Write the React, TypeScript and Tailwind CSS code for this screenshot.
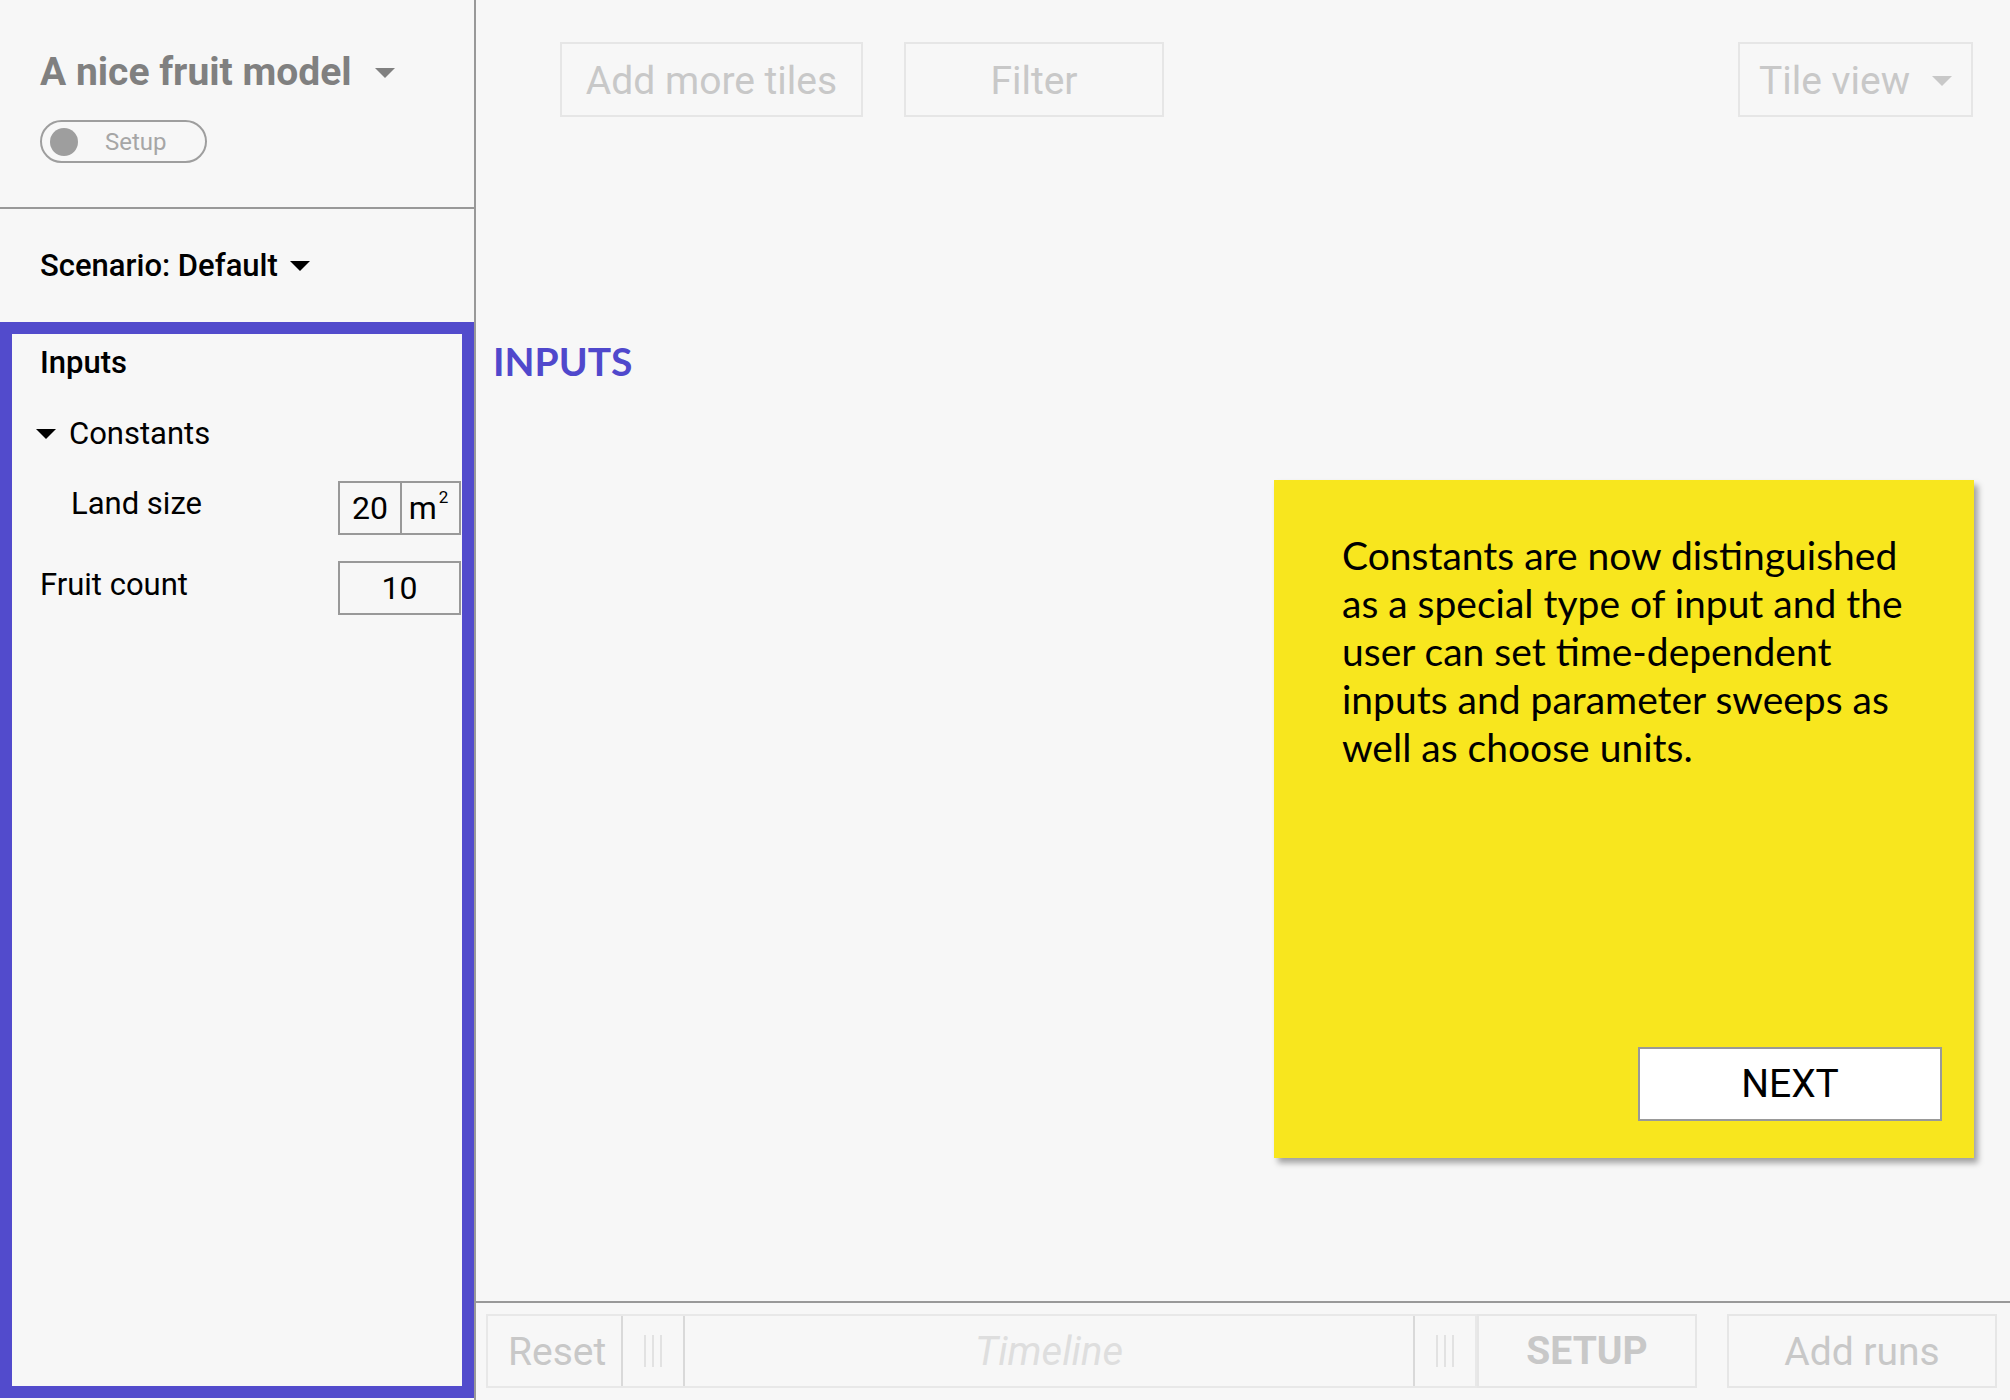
import React from "react";

const Caret = ({ color, w = 20, h = 10 }: { color: string; w?: number; h?: number }) => (
  <svg viewBox="0 0 20 10" width={w} height={h} className="shrink-0">
    <polygon points="0,0 20,0 10,10" fill={color} />
  </svg>
);

const Handle = () => (
  <div className="flex items-center justify-center gap-[6px] w-[62px] h-full border-l-2 border-[#d9d9d9]">
    <span className="w-[2px] h-[32px] bg-[#e2e2e2]" />
    <span className="w-[2px] h-[32px] bg-[#e2e2e2]" />
    <span className="w-[2px] h-[32px] bg-[#e2e2e2]" />
  </div>
);

export default function App() {
  return (
    <div className="flex w-[2010px] h-[1400px] overflow-hidden bg-[#f7f7f7] font-['Roboto',sans-serif]">
      {/* Sidebar */}
      <aside className="flex flex-col w-[476px] shrink-0 border-r-2 border-[#999]">
        <div className="h-[209px] shrink-0 border-b-2 border-[#999] pl-[40px] pt-[53px]">
          <div className="flex items-center gap-[23px]">
            <span className="text-[39px] leading-none font-bold text-[#808080]">A nice fruit model</span>
            <Caret color="#808080" />
          </div>
          <div className="mt-[28px] flex items-center w-[167px] h-[43px] rounded-full border-2 border-[#9e9e9e] pl-[8px]">
            <span className="w-[28px] h-[28px] rounded-full bg-[#9e9e9e]" />
            <span className="ml-[27px] text-[24px] leading-none text-[#a6a6a6]">Setup</span>
          </div>
        </div>
        <div className="h-[113px] shrink-0 pl-[40px] pt-[41px]">
          <div className="flex items-center gap-[12px]">
            <span className="text-[31px] leading-none font-medium text-black">Scenario: Default</span>
            <Caret color="#000" />
          </div>
        </div>
        <div className="flex-1 mb-[2px] border-[12px] border-[#524bcc] pt-[13px]">
          <div className="pl-[28px] text-[31px] leading-none font-medium text-black">Inputs</div>
          <div className="mt-[40px] flex items-center pl-[24px]">
            <Caret color="#000" w={20} h={10} />
            <span className="ml-[13px] text-[31px] leading-none text-black">Constants</span>
          </div>
          <div className="mt-[32px] flex items-center justify-between pl-[59px] pr-[1px] h-[54px]">
            <span className="text-[31px] leading-none text-black pb-[9px]">Land size</span>
            <div className="flex w-[123px] h-[54px] border-2 border-[#999] text-[32px] text-black">
              <div className="w-[62px] flex items-center justify-center border-r-2 border-[#999]">20</div>
              <div className="flex-1 flex items-center justify-center">
                <span className="leading-none pr-[4px]">
                  m<span className="text-[17px] leading-none relative -top-[16px] ml-[2px]">2</span>
                </span>
              </div>
            </div>
          </div>
          <div className="mt-[26px] flex items-center justify-between pl-[28px] pr-[1px] h-[54px]">
            <span className="text-[31px] leading-none text-black pb-[8px]">Fruit count</span>
            <div className="flex items-center justify-center w-[123px] h-[54px] border-2 border-[#999] text-[32px] text-black">
              10
            </div>
          </div>
        </div>
      </aside>

      {/* Main */}
      <main className="flex-1 flex flex-col min-w-0">
        <div className="flex-1 flex flex-col">
          <div className="flex items-start pt-[42px] pl-[84px] pr-[37px]">
            <div className="flex items-center justify-center w-[303px] h-[75px] pt-[3px] border-2 border-[#e6e6e6] text-[39px] text-[#c8c8c8] leading-none">
              Add more tiles
            </div>
            <div className="ml-[41px] flex items-center justify-center w-[260px] h-[75px] pt-[3px] border-2 border-[#e6e6e6] text-[39px] text-[#c8c8c8] leading-none">
              Filter
            </div>
            <div className="ml-auto flex items-center justify-between w-[235px] h-[75px] pt-[3px] border-2 border-[#e6e6e6] pl-[19px] pr-[19px] text-[39px] text-[#c8c8c8] leading-none">
              <span>Tile view</span>
              <Caret color="#c8c8c8" />
            </div>
          </div>
          <h2 className="mt-[225px] pl-[17px] font-['Lato',sans-serif] font-bold text-[39px] leading-none text-[#5048cc]">
            INPUTS
          </h2>
          <div className="mt-[99px] flex justify-end pr-[36px]">
            <div className="flex flex-col w-[700px] h-[678px] bg-[#f8e61e] shadow-[4px_5px_6px_rgba(0,0,0,0.35)] pl-[68px] pt-[51px] pr-[32px] pb-[37px]">
              <p className="font-['Lato',sans-serif] text-[39px] leading-[48px] text-black whitespace-nowrap">
                Constants are now distinguished
                <br />
                as a special type of input and the
                <br />
                user can set time-dependent
                <br />
                inputs and parameter sweeps as
                <br />
                well as choose units.
              </p>
              <button className="mt-auto self-end flex items-center justify-center w-[304px] h-[74px] bg-white border-2 border-[#999] text-[39px] leading-none text-black">
                NEXT
              </button>
            </div>
          </div>
        </div>

        {/* Bottom bar */}
        <div className="h-[99px] shrink-0 border-t-2 border-[#999] pt-[11px] pl-[10px] pr-[13px]">
          <div className="flex items-stretch h-[74px]">
            <div className="flex items-stretch w-[991px] border-2 border-[#e8e8e8]">
              <div className="flex items-center w-[133px] pl-[20px] pt-[2px] text-[39px] leading-none text-[#c8c8c8]">Reset</div>
              <Handle />
              <div className="flex-1 flex items-center justify-center pt-[2px] border-l-2 border-[#d9d9d9] text-[40px] leading-none italic text-[#dedede]">
                Timeline
              </div>
              <Handle />
            </div>
            <div className="flex items-center justify-center w-[220px] border-2 border-[#e6e6e6] text-[39px] leading-none font-bold text-[#c8c8c8]">
              SETUP
            </div>
            <div className="ml-auto flex items-center justify-center w-[270px] pt-[2px] border-2 border-[#e6e6e6] text-[39px] leading-none text-[#c8c8c8]">
              Add runs
            </div>
          </div>
        </div>
      </main>
    </div>
  );
}
